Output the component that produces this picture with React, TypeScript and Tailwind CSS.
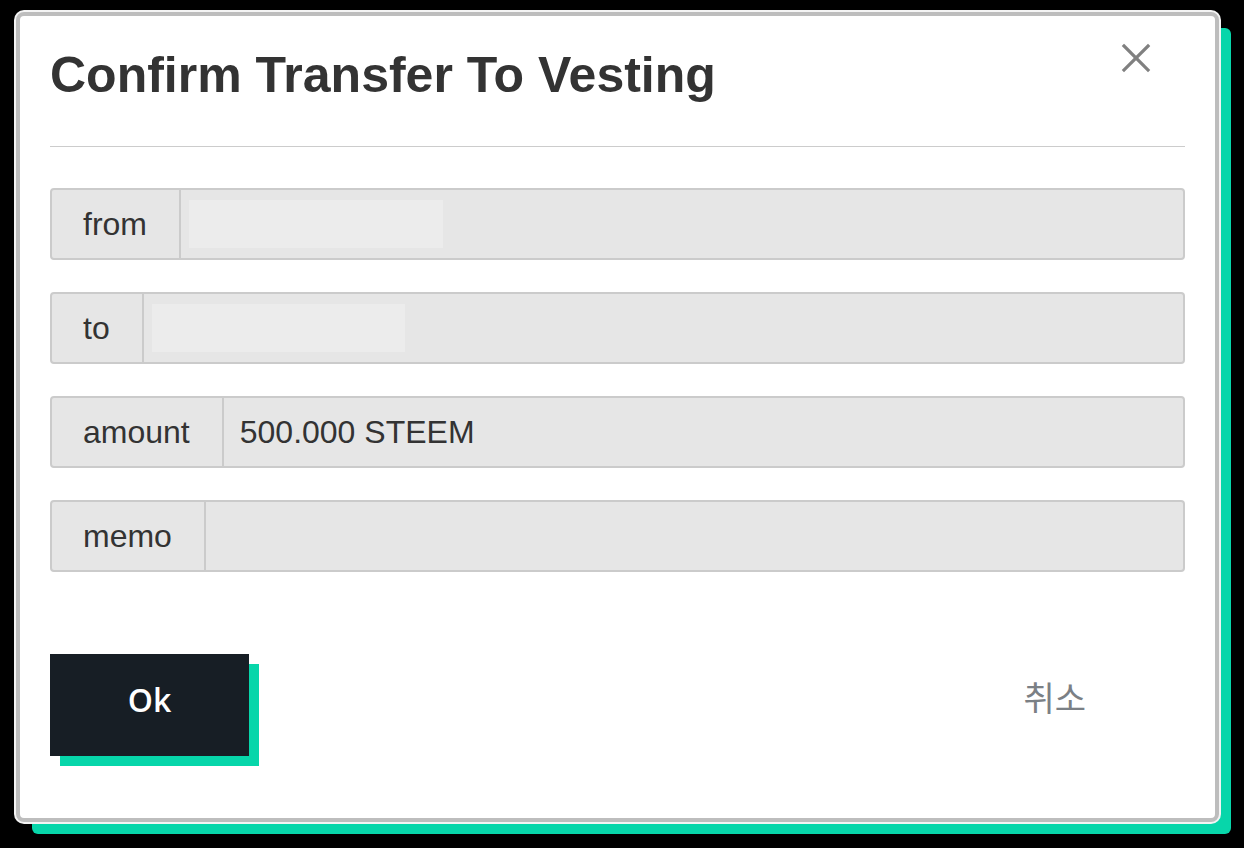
import React from "react";

const SANS = "font-['Liberation_Sans',Arial,'Noto_Sans_CJK_KR',sans-serif]";

type Row = { label: string; value?: string; blank?: number };

const ROWS: Row[] = [
  { label: "from", blank: 254 },
  { label: "to", blank: 253 },
  { label: "amount", value: "500.000 STEEM" },
  { label: "memo" },
];

function CloseIcon() {
  return (
    <svg width="30" height="30" viewBox="0 0 30 30" fill="none" stroke="#808080" strokeWidth={3.2} strokeLinecap="square">
      <line x1="3" y1="3" x2="27" y2="27" />
      <line x1="27" y1="3" x2="3" y2="27" />
    </svg>
  );
}

function Field({ row }: { row: Row }) {
  return (
    <div className="flex h-[72px] rounded-[4px] border-2 border-[#cbcbcb] bg-[#e6e6e6]">
      <div className="flex items-center border-r-2 border-[#cbcbcb] pl-[31px] pr-[32px] text-[32px] text-[#333]">{row.label}</div>
      <div className="flex flex-1 items-center">
        {row.blank ? (
          <div className="mx-[8px] h-[48px] bg-[#ececec]" style={{ width: row.blank }} />
        ) : (
          <span className="pl-[16px] text-[32px] text-[#333]">{row.value}</span>
        )}
      </div>
    </div>
  );
}

export default function App() {
  return (
    <div className={`min-h-[848px] bg-black pl-[16px] pt-[12px] ${SANS}`}>
      <div className="relative h-[810px] w-[1203px] rounded-[8px] border-4 border-[#bdbdbd] bg-white px-[30px] shadow-[0_0_0_2px_#f4f4f4,14px_14px_0_-2px_#07d6aa]">
        <button className="absolute right-[64px] top-[27px]">
          <CloseIcon />
        </button>
        <div className="h-[131px] border-b border-[#cccccc] pt-[34px]">
          <h1 className="text-[50px] font-bold leading-none text-[#333]">Confirm Transfer To Vesting</h1>
        </div>
        <div className="mt-[41px] flex flex-col gap-[32px]">
          {ROWS.map((r) => (
            <Field key={r.label} row={r} />
          ))}
        </div>
        <div className="mt-[82px] flex items-center justify-between">
          <button className="h-[102px] w-[199px] bg-[#171e25] pb-[10px] font-['Open_Sans',sans-serif] text-[32px] font-semibold text-white shadow-[10px_10px_0_#07d6aa]">
            Ok
          </button>
          <button className="mb-[18px] mr-[99px] font-['Noto_Sans_CJK_KR',sans-serif] text-[34px] font-normal text-[#7b8085]">취소</button>
        </div>
      </div>
    </div>
  );
}
